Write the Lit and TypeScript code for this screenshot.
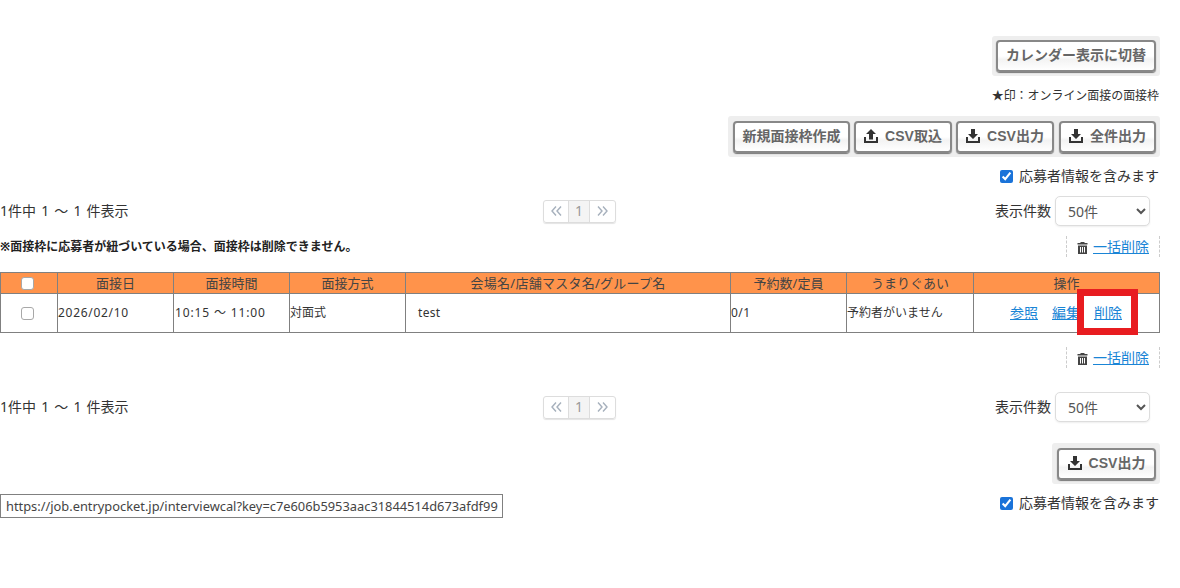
import { LitElement, html, css, svg } from "lit";
import { customElement } from "lit/decorators.js";

const dl = svg`<svg class="ico" viewBox="0 0 14 14" width="14" height="14"><path d="M5 0h4v5h3l-5 5-5-5h3z" fill="#333"/><path d="M0 8h2v4h10v-4h2v6h-14z" fill="#333"/></svg>`;
const ul = svg`<svg class="ico" viewBox="0 0 14 14" width="14" height="14"><path d="M7 0l5 5h-3v5.500h-4v-5.500h-3z" fill="#333"/><path d="M0 8h2v4h10v-4h2v6h-14z" fill="#333"/></svg>`;
const trash = svg`<svg class="trash" viewBox="0 0 11 12" width="11" height="12"><path d="M3.500 0h4v1h3v1.500h-10v-1.500h3z" fill="#444"/><path d="M1 3.500h9v8.500h-9zM3 5v5.500h1v-5.500zM5 5v5.500h1v-5.500zM7 5v5.500h1v-5.500z" fill="#444" fill-rule="evenodd"/></svg>`;
const prev = svg`<svg viewBox="0 0 11 10" width="11" height="10"><path d="M5 .5L1 5l4 4.500M10 .5L6 5l4 4.500" fill="none" stroke="#a6b0bc" stroke-width="1.400"/></svg>`;
const next = svg`<svg viewBox="0 0 11 10" width="11" height="10"><path d="M1 .5L5 5 1 9.500M6 .5L10 5 6 9.500" fill="none" stroke="#a6b0bc" stroke-width="1.400"/></svg>`;

@customElement("app-root")
export class AppRoot extends LitElement {
  static styles = css`
    :host { display: block; width: 1160px; height: 588px; position: relative; padding-top: 36px; box-sizing: border-box;
      font-family: "Noto Sans", "Noto Sans CJK JP", sans-serif; font-size: 13px; color: #333; line-height: 1; }
    * { box-sizing: border-box; }
    .right { display: flex; justify-content: flex-end; }
    .wrap { display: flex; background: #eee; border-radius: 3px; padding: 5px 4px 4px 5px; gap: 4px; }
    .wrap.one { padding: 4px; }
    .btn { display: flex; align-items: center; justify-content: center; gap: 7px; height: 32px; padding-bottom: 2px; border: 2px solid #888; border-radius: 4px;
      background: linear-gradient(#fff 50%, #f3f3f3 62%, #fff); color: #666; font-weight: 700; font-size: 14px; box-shadow: 0 1px 1px #777; white-space: nowrap; }
    .lat { font-family: "Liberation Sans", sans-serif; font-size: 14px; }
    .ico { display: block; flex: none; margin-top: -1px; }
    .cal { width: 160px; }
    .w117 { width: 117px; }
    .w98 { width: 98px; }
    .w97 { width: 97px; margin-left: 1px; }
    .note { height: 12px; margin-top: 14px; font-size: 12px; line-height: 12px; text-align: right; letter-spacing: -.05px; padding-right: 1px; }
    .tools { margin-top: 14px; }
    .check { display: flex; align-items: center; justify-content: flex-end; gap: 6px; font-size: 14px; height: 16px; padding-right: 1px; }
    .check input { margin: 0; width: 13px; height: 13px; accent-color: #1a73d9; }
    .c1 { margin-top: 11px; }
    .bar { display: grid; grid-template-columns: 543px 73px 1fr; align-items: center; height: 30px; }
    .bar1 { margin-top: 12px; }
    .bar2 { margin-top: 24px; }
    .count { font-size: 14px; word-spacing: 1.500px; }
    .pager { display: flex; height: 23px; width: 73px; border: 1px solid #ddd; border-radius: 3px; box-shadow: 0 1px 1px #e4e4e4; }
    .pager span { display: flex; align-items: center; justify-content: center; }
    .pager span:nth-child(1) { width: 24px; }
    .pager span:nth-child(2) { width: 22px; background: #f4f4f4; border-left: 1px solid #ddd; border-right: 1px solid #ddd; color: #999; font-size: 14px; }
    .pager span:nth-child(3) { flex: 1; }
    .size { display: flex; justify-content: flex-end; align-items: center; gap: 4px; padding-right: 10px; font-size: 14px; }
    select { width: 95px; height: 30px; border: 1px solid #ddd; border-radius: 5px; background: #fff; color: #555; font: inherit; font-size: 14px; padding-left: 8px; box-shadow: 0 1px 2px #eee; }
    .warn-row { display: flex; justify-content: space-between; align-items: center; height: 21px; margin-top: 10px; }
    .warn { font-size: 12px; font-weight: 700; color: #222; }
    .bulk { display: flex; align-items: center; justify-content: flex-end; gap: 5px; width: 94px; height: 21px; padding-right: 10px; border-left: 1px dashed #ccc; border-right: 1px dashed #ccc; font-size: 14px; }
    .bulk-only { display: flex; justify-content: flex-end; margin-top: 14px; }
    a { color: #1a85d6; text-decoration: underline; }
    .bulk .trash { margin-top: 3px; }
    table { margin-top: 15px; border-collapse: collapse; table-layout: fixed; width: 1159px; font-size: 12px; color: #333; }
    th, td { border: 1px solid #808080; padding: 0; }
    th { height: 21px; background: #ff934b; font-weight: 400; font-size: 13px; color: #444; }
    td { height: 39px; }
    th input, td input { appearance: none; display: block; width: 13px; height: 13px; margin: 0 0 0 20px; background: #fff; border: 1.500px solid #a8a8a8; border-radius: 3px; }
    .venue { letter-spacing: .25px; }
    .date { letter-spacing: .7px; }
    .time { letter-spacing: .85px; padding-left: 1px; }
    .ops { display: flex; justify-content: flex-end; gap: 14px; padding-right: 37px; font-size: 14px; }
    .name { padding-left: 12px; letter-spacing: .3px; }
    .num { letter-spacing: .4px; }
    .hl { position: absolute; left: 1077px; top: 289px; width: 61px; height: 46px; border: 7px solid #e81c20; pointer-events: none; }
    .csv { margin-top: 21px; }
    .csv-b { width: 99px; }
    .last { display: flex; justify-content: space-between; align-items: flex-start; margin-top: 10px; height: 24px; }
    .last .check { margin-top: 1px; }
    .url { border: 1px solid #808080; width: 503px; height: 24px; display: flex; align-items: center; padding-left: 5px; font-size: 12.850px; color: #444; white-space: nowrap; }
  `;

  private bar(cls: string) {
    return html`<div class="bar ${cls}">
      <div class="count">1件中 1 ～ 1 件表示</div>
      <div class="pager"><span>${prev}</span><span>1</span><span>${next}</span></div>
      <div class="size">表示件数 <select><option>50件</option></select></div>
    </div>`;
  }

  private bulk() {
    return html`<div class="bulk">${trash}<a href="#">一括削除</a></div>`;
  }

  render() {
    const cols = [57, 116, 116, 116, 325, 116, 127, 186];
    return html`
      <div class="right"><div class="wrap one"><div class="btn cal">カレンダー表示に切替</div></div></div>
      <div class="note">★印：オンライン面接の面接枠</div>
      <div class="right tools"><div class="wrap">
        <div class="btn w117">新規面接枠作成</div>
        <div class="btn w98">${ul}<span><span class="lat">CSV</span>取込</span></div>
        <div class="btn w98">${dl}<span><span class="lat">CSV</span>出力</span></div>
        <div class="btn w97">${dl}全件出力</div>
      </div></div>
      <div class="check c1"><input type="checkbox" checked />応募者情報を含みます</div>
      ${this.bar("bar1")}
      <div class="warn-row"><div class="warn">※面接枠に応募者が紐づいている場合、面接枠は削除できません。</div>${this.bulk()}</div>
      <table>
        <colgroup>${cols.map((w) => html`<col style="width:${w}px" />`)}</colgroup>
        <thead><tr>
          <th><input type="checkbox" /></th><th>面接日</th><th>面接時間</th><th>面接方式</th>
          <th class="venue">会場名/店舗マスタ名/グループ名</th><th>予約数/定員</th><th>うまりぐあい</th><th>操作</th>
        </tr></thead>
        <tbody><tr>
          <td><input type="checkbox" /></td><td class="date">2026/02/10</td><td class="time">10:15 ～ 11:00</td><td>対面式</td>
          <td class="name">test</td><td class="num">0/1</td><td>予約者がいません</td>
          <td><div class="ops"><a href="#">参照</a><a href="#">編集</a><a href="#">削除</a></div></td>
        </tr></tbody>
      </table>
      <div class="bulk-only">${this.bulk()}</div>
      ${this.bar("bar2")}
      <div class="right csv"><div class="wrap"><div class="btn csv-b">${dl}<span><span class="lat">CSV</span>出力</span></div></div></div>
      <div class="last">
        <div class="url">https://job.entrypocket.jp/interviewcal?key=c7e606b5953aac31844514d673afdf99</div>
        <div class="check"><input type="checkbox" checked />応募者情報を含みます</div>
      </div>
      <div class="hl"></div>
    `;
  }
}
